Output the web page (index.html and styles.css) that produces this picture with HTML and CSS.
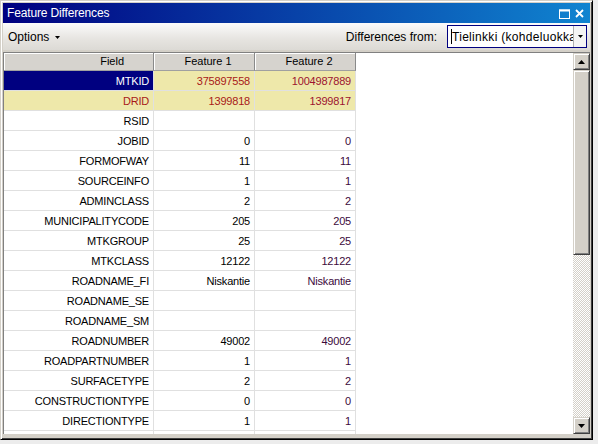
FILE: index.html
```html
<!DOCTYPE html>
<html>
<head>
<meta charset="utf-8">
<title>Feature Differences</title>
<link rel="stylesheet" href="styles.css">
</head>
<body>
<div class="window">
  <div class="titlebar">
    <span class="title">Feature Differences</span>
    <div class="tbtns">
      <svg width="11" height="10" viewBox="0 0 11 10"><rect x="0.5" y="1" width="10" height="8.5" fill="none" stroke="#fff" stroke-width="1"/><rect x="0" y="0.5" width="11" height="2" fill="#fff"/></svg>
      <svg width="9" height="9" viewBox="0 0 9 9"><path d="M1 1L8 8M8 1L1 8" stroke="#fff" stroke-width="1.8"/></svg>
    </div>
  </div>
  <div class="toolbar">
    <div class="options">Options <svg width="5" height="3" viewBox="0 0 5 3"><path d="M0 0H5L2.5 3Z" fill="#000"/></svg></div>
    <div class="diff">
      <span class="difflabel">Differences from:</span>
      <div class="combo">
        <div class="ctext"><span class="caret"></span>Tielinkki (kohdeluokka</div>
        <div class="cbtn"><svg width="5" height="3" viewBox="0 0 5 3"><path d="M0 0H5L2.5 3Z" fill="#000"/></svg></div>
      </div>
    </div>
  </div>
  <div class="content">
    <div class="gridwrap">
      <div class="grid">
        <div class="hcell hfield">Field</div>
        <div class="hcell hfeat">Feature 1</div>
        <div class="hcell hfeat">Feature 2</div>

        <div class="cell field selected">MTKID</div>
        <div class="cell diff1">375897558</div>
        <div class="cell diff2">1004987889</div>

        <div class="cell field difffield">DRID</div>
        <div class="cell diff1">1399818</div>
        <div class="cell diff2">1399817</div>

        <div class="cell field">RSID</div><div class="cell v1"></div><div class="cell v2"></div>
        <div class="cell field">JOBID</div><div class="cell v1">0</div><div class="cell v2">0</div>
        <div class="cell field">FORMOFWAY</div><div class="cell v1">11</div><div class="cell v2">11</div>
        <div class="cell field">SOURCEINFO</div><div class="cell v1">1</div><div class="cell v2">1</div>
        <div class="cell field">ADMINCLASS</div><div class="cell v1">2</div><div class="cell v2">2</div>
        <div class="cell field">MUNICIPALITYCODE</div><div class="cell v1">205</div><div class="cell v2">205</div>
        <div class="cell field">MTKGROUP</div><div class="cell v1">25</div><div class="cell v2">25</div>
        <div class="cell field">MTKCLASS</div><div class="cell v1">12122</div><div class="cell v2">12122</div>
        <div class="cell field">ROADNAME_FI</div><div class="cell v1">Niskantie</div><div class="cell v2">Niskantie</div>
        <div class="cell field">ROADNAME_SE</div><div class="cell v1"></div><div class="cell v2"></div>
        <div class="cell field">ROADNAME_SM</div><div class="cell v1"></div><div class="cell v2"></div>
        <div class="cell field">ROADNUMBER</div><div class="cell v1">49002</div><div class="cell v2">49002</div>
        <div class="cell field">ROADPARTNUMBER</div><div class="cell v1">1</div><div class="cell v2">1</div>
        <div class="cell field">SURFACETYPE</div><div class="cell v1">2</div><div class="cell v2">2</div>
        <div class="cell field">CONSTRUCTIONTYPE</div><div class="cell v1">0</div><div class="cell v2">0</div>
        <div class="cell field">DIRECTIONTYPE</div><div class="cell v1">1</div><div class="cell v2">1</div>
        <div class="cell field"></div><div class="cell v1"></div><div class="cell v2"></div>
      </div>
    </div>
    <div class="vscroll">
      <div class="sbtn"><svg width="7" height="4" viewBox="0 0 7 4"><path d="M3.5 0L7 4H0Z" fill="#000"/></svg></div>
      <div class="thumb"></div>
      <div class="track"></div>
      <div class="sbtn"><svg width="7" height="4" viewBox="0 0 7 4"><path d="M0 0H7L3.5 4Z" fill="#000"/></svg></div>
    </div>
  </div>
</div>
</body>
</html>
```
FILE: styles.css
```css
html, body {
  margin: 0;
  padding: 0;
}
body {
  background: #ececec;
  width: 598px;
  height: 444px;
  overflow: hidden;
  font-family: "Liberation Sans", Arial, sans-serif;
}
.window {
  box-sizing: border-box;
  width: 593px;
  height: 440px;
  background: #d4d0c8;
  border: 1px solid;
  border-color: #d4d0c8 #000 #000 #d4d0c8;
  padding: 2px;
  box-shadow: inset 1px 1px 0 #fff, inset -1px -1px 0 #404040;
  display: flex;
  flex-direction: column;
}
.titlebar {
  height: 20px;
  flex: none;
  background: linear-gradient(to right, #000080, #1084d0);
  display: flex;
  align-items: center;
  justify-content: space-between;
  color: #fff;
}
.title {
  font-size: 12px;
  padding-left: 4px;
  letter-spacing: -0.15px;
  line-height: 20px;
}
.tbtns {
  display: flex;
  align-items: center;
  gap: 5px;
  padding-right: 6px;
  padding-top: 1px;
}
.tbtns svg {
  display: block;
}
.toolbar {
  height: 27px;
  flex: none;
  background: linear-gradient(#fbfbfb, #e6e4e0 60%, #dcdad5);
  display: flex;
  align-items: center;
  justify-content: space-between;
  font-size: 12px;
  color: #000;
}
.options {
  padding-left: 5px;
  display: flex;
  align-items: center;
  gap: 6px;
}
.options svg {
  display: block;
  margin-top: 1px;
}
.diff {
  display: flex;
  align-items: center;
  gap: 10px;
  padding-right: 3px;
}
.combo {
  box-sizing: border-box;
  width: 140px;
  height: 23px;
  border: 1px solid #000080;
  background: #fff;
  display: flex;
}
.ctext {
  flex: 1;
  min-width: 0;
  overflow: hidden;
  white-space: nowrap;
  display: flex;
  align-items: center;
  padding-left: 3px;
  font-size: 12px;
  letter-spacing: 0.3px;
}
.caret {
  width: 1px;
  height: 15px;
  background: #000;
  flex: none;
}
.cbtn {
  width: 12px;
  flex: none;
  border-left: 1px solid #b0b0b0;
  background: #f4f4f4;
  display: flex;
  align-items: center;
  justify-content: center;
}
.cbtn svg {
  display: block;
}
.content {
  margin-top: 2px;
  height: 382px;
  flex: none;
  box-sizing: border-box;
  border-top: 1px solid #808080;
  border-left: 1px solid #808080;
  display: flex;
}
.gridwrap {
  flex: 1;
  background: #fff;
  overflow: hidden;
}
.grid {
  display: grid;
  grid-template-columns: 150px 101px 101px;
  width: 352px;
  font-size: 11px;
  letter-spacing: -0.2px;
}
.hcell {
  box-sizing: border-box;
  height: 18px;
  line-height: 17px;
  background: #d6d3ce;
  border-right: 1px solid #8a8a8a;
  border-bottom: 1px solid #a0a0a0;
  box-shadow: inset 1px 1px 0 #fff;
  color: #000;
  letter-spacing: 0;
  white-space: nowrap;
}
.hfield {
  text-align: right;
  padding-right: 29px;
}
.hfeat {
  text-align: center;
  padding-left: 8px;
}
.cell {
  box-sizing: border-box;
  height: 20px;
  line-height: 20px;
  border-right: 1px solid #e0e0e0;
  border-bottom: 1px solid #e0e0e0;
  text-align: right;
  padding-right: 4px;
  white-space: nowrap;
  overflow: hidden;
  color: #000;
}
.selected {
  background: #000080;
  color: #fff;
}
.difffield {
  background: #eee8aa;
  color: #a81818;
}
.diff1 {
  background: #eee8aa;
  color: #a81818;
}
.diff2 {
  background: #eee8aa;
  color: #9c1230;
}
.v2 {
  color: #3c0a3c;
}
.vscroll {
  width: 17px;
  flex: none;
  display: flex;
  flex-direction: column;
}
.sbtn, .thumb {
  box-sizing: border-box;
  background: #d4d0c8;
  border: 1px solid;
  border-color: #d4d0c8 #404040 #404040 #d4d0c8;
  box-shadow: inset 1px 1px 0 #fff, inset -1px -1px 0 #808080;
}
.sbtn {
  height: 17px;
  flex: none;
  display: flex;
  align-items: center;
  justify-content: center;
}
.sbtn svg {
  display: block;
}
.thumb {
  height: 185px;
  flex: none;
}
.track {
  flex: 1;
  background-color: #fff;
  background-image: conic-gradient(#d4d0c8 25%, #fff 0 50%, #d4d0c8 0 75%, #fff 0);
  background-size: 2px 2px;
}
```
